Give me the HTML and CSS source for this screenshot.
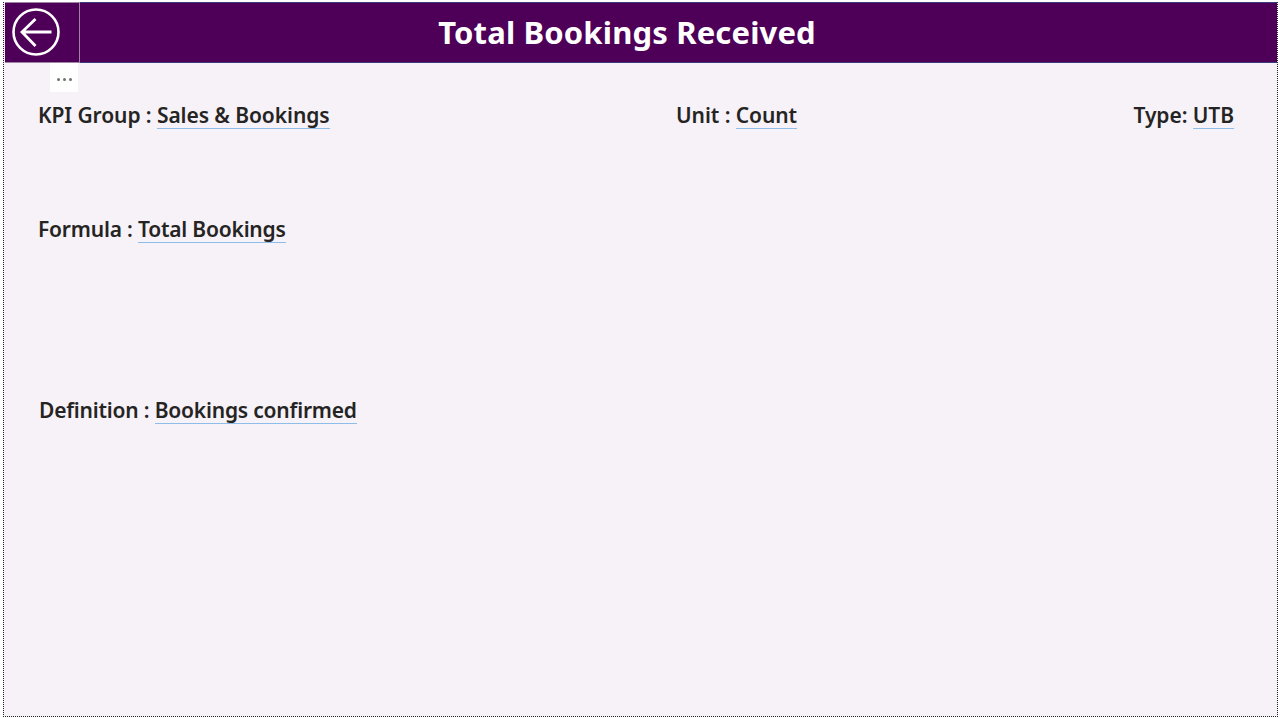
FILE: index.html
```html
<!DOCTYPE html>
<html lang="en">
<head>
<meta charset="utf-8">
<title>Total Bookings Received</title>
<link rel="stylesheet" href="styles.css">
</head>
<body>
<div class="frame">
  <header class="header">
    <button class="back" aria-label="Back">
      <svg width="50" height="50" viewBox="0 0 50 50" fill="none" stroke="#fff">
        <circle cx="25" cy="25" r="22.500" stroke-width="2.600"/>
        <path d="M40.500 25H11.500M24.500 12 11 25 24.500 39" stroke-width="2.800"/>
      </svg>
    </button>
    <h1 class="title">Total Bookings Received</h1>
    <div class="more"><i></i><i></i><i></i></div>
  </header>
  <main class="content">
    <div class="row row-top">
      <p class="field">KPI Group : <span class="val">Sales &amp; Bookings</span></p>
      <p class="field field-unit">Unit : <span class="val">Count</span></p>
      <p class="field">Type: <span class="val">UTB</span></p>
    </div>
    <div class="row row-formula">
      <p class="field field-tight">Formula : <span class="val">Total Bookings</span></p>
    </div>
    <div class="row row-def">
      <p class="field field-tight">Definition : <span class="val">Bookings confirmed</span></p>
    </div>
  </main>
</div>
</body>
</html>
```
FILE: styles.css
```css
* { box-sizing: border-box; }
html, body { margin: 0; height: 100%; background: #fff; }
body { padding: 2px 2px 1px 3px; font-family: "Noto Sans", "Open Sans", sans-serif; overflow: hidden; }
.frame {
  height: 715px;
  background: #f6f2f8;
  border-left: 1px dotted #222;
  border-right: 1px dotted #222;
  border-bottom: 1px dotted #222;
  padding-left: 1px;
  display: flex;
  flex-direction: column;
}
.header {
  position: relative;
  height: 61px;
  background: #4e0058;
  border-top: 1px solid #3c3a7c;
  border-bottom: 1px solid #3c3a7c;
  display: flex;
  align-items: center;
}
.back {
  width: 75px;
  height: 61px;
  margin-top: -1px;
  flex: none;
  padding: 0 0 0 5.500px;
  background: transparent;
  border: 1px solid #9c86a4;
  border-left: 0;
  display: flex;
  align-items: center;
}
.title {
  flex: 1;
  margin: -2px 0 0;
  padding-right: 103px;
  text-align: center;
  color: #fff;
  font-size: 31px;
  font-weight: 700;
  letter-spacing: 0.16px;
}
.more {
  position: absolute;
  left: 45px;
  top: 60px;
  width: 28px;
  height: 29px;
  padding-top: 3px;
  background: #fff;
  display: flex;
  align-items: center;
  justify-content: center;
  gap: 3px;
}
.more i { width: 3px; height: 3px; background: #707070; border-radius: 50%; }
.content { padding: 0 43px 0 33px; }
.row { display: flex; justify-content: space-between; }
.row-top { padding-top: 38px; }
.row-formula { padding-top: 86px; }
.row-def { padding-top: 153px; padding-left: 1px; }
.field {
  margin: 0;
  font-size: 21px;
  line-height: 28px;
  font-weight: 600;
  color: #252423;
  letter-spacing: -0.08px;
  white-space: pre;
}
.field-tight { letter-spacing: -0.2px; }
.field-unit { margin-left: 10px; }
.val { display: inline-block; line-height: 26px; border-bottom: 1px solid #8dbde8; }
```
